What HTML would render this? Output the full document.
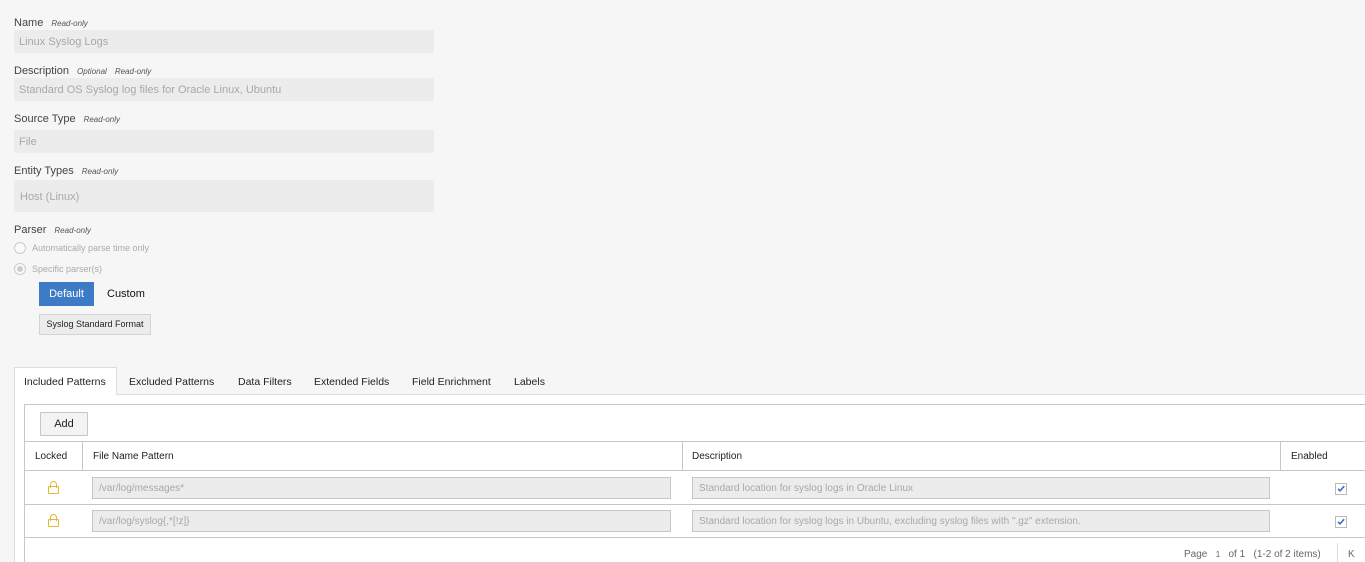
<!DOCTYPE html>
<html><head><style>
*{box-sizing:border-box;margin:0;padding:0}
body{width:1365px;height:562px;overflow:hidden;background:#f6f6f6;font-family:"Liberation Sans",sans-serif;color:#333;position:relative}
.a{position:absolute}
.lbl{font-size:11px;color:#444}
.lbl i{font-size:8px;color:#555;margin-left:8px}
.inp{background:#ececec;border-radius:2px;width:420px;left:14px;font-size:11px;color:#a8a8a8;padding-left:5px;padding-top:1px}
.radio{width:12px;height:12px;border:1px solid #ccc;border-radius:50%;background:#fafafa}
.rt{font-size:9px;color:#aaa}
.tab{font-size:10.5px;color:#222;top:376px}
.ti{background:#ececec;border:1px solid #c5c7cc;height:22px;font-size:10px;color:#a8a8a8;padding:5px 0 0 6px}
.cb{width:12px;height:12px;border:1px solid #bbb;background:#fff}
.cb svg{display:block;position:absolute;left:0;top:0}
.lock{width:11px;height:8px;border:1px solid #e8b730;border-radius:1px}
.lock:before{content:"";position:absolute;left:1px;top:-6px;width:5px;height:6px;border:1px solid #e8b730;border-bottom:none;border-radius:4px 4px 0 0}
</style></head><body>
<div class="a lbl" style="left:14px;top:17px">Name<i>Read-only</i></div>
<div class="a inp" style="top:30px;height:23px;line-height:23px">Linux Syslog Logs</div>
<div class="a lbl" style="left:14px;top:65px">Description<i>Optional</i><i>Read-only</i></div>
<div class="a inp" style="top:78px;height:23px;line-height:23px">Standard OS Syslog log files for Oracle Linux, Ubuntu</div>
<div class="a lbl" style="left:14px;top:113px">Source Type<i>Read-only</i></div>
<div class="a inp" style="top:130px;height:23px;line-height:23px">File</div>
<div class="a lbl" style="left:14px;top:165px">Entity Types<i>Read-only</i></div>
<div class="a inp" style="top:180px;height:32px;line-height:32px;padding-left:6px">Host (Linux)</div>
<div class="a lbl" style="left:14px;top:224px">Parser<i>Read-only</i></div>
<div class="a radio" style="left:14px;top:242px"></div>
<div class="a rt" style="left:32px;top:243px">Automatically parse time only</div>
<div class="a radio" style="left:14px;top:263px"><div style="width:6px;height:6px;border-radius:50%;background:#ccc;margin:2px"></div></div>
<div class="a rt" style="left:32px;top:264px">Specific parser(s)</div>
<div class="a" style="left:39px;top:282px;width:55px;height:24px;background:#3e7bc6;color:#fff;font-size:11px;text-align:center;line-height:24px">Default</div>
<div class="a" style="left:107px;top:288px;font-size:11px;color:#111">Custom</div>
<div class="a" style="left:39px;top:314px;width:112px;height:21px;background:#ececec;border:1px solid #d4d4d4;font-size:9px;color:#222;text-align:center;line-height:19px">Syslog Standard Format</div>

<div class="a" style="left:14px;top:394px;width:1351px;height:168px;background:#fff;border-top:1px solid #ddd;border-left:1px solid #ddd"></div>
<div class="a" style="left:14px;top:367px;width:103px;height:28px;background:#fff;border:1px solid #ddd;border-bottom:none"></div>
<div class="a tab" style="left:24px">Included Patterns</div>
<div class="a tab" style="left:129px">Excluded Patterns</div>
<div class="a tab" style="left:238px">Data Filters</div>
<div class="a tab" style="left:314px">Extended Fields</div>
<div class="a tab" style="left:412px">Field Enrichment</div>
<div class="a tab" style="left:514px">Labels</div>

<div class="a" style="left:24px;top:404px;width:1341px;height:158px;border:1px solid #c5c7cc;border-right:none;border-bottom:none"></div>
<div class="a" style="left:40px;top:412px;width:48px;height:24px;background:#f3f3f3;border:1px solid #c5c7cc;font-size:11px;text-align:center;line-height:22px;color:#222">Add</div>
<div class="a" style="left:24px;top:441px;width:1341px;height:1px;background:#c5c7cc"></div>
<div class="a" style="left:24px;top:470px;width:1341px;height:1px;background:#c5c7cc"></div>
<div class="a" style="left:24px;top:504px;width:1341px;height:1px;background:#c5c7cc"></div>
<div class="a" style="left:24px;top:537px;width:1341px;height:1px;background:#c5c7cc"></div>
<div class="a" style="left:82px;top:441px;width:1px;height:29px;background:#c5c7cc"></div>
<div class="a" style="left:682px;top:441px;width:1px;height:29px;background:#c5c7cc"></div>
<div class="a" style="left:1280px;top:441px;width:1px;height:29px;background:#c5c7cc"></div>
<div class="a" style="left:35px;top:451px;font-size:10px;color:#222">Locked</div>
<div class="a" style="left:93px;top:451px;font-size:10px;color:#222">File Name Pattern</div>
<div class="a" style="left:692px;top:451px;font-size:10px;color:#222">Description</div>
<div class="a" style="left:1291px;top:451px;font-size:10px;color:#222">Enabled</div>

<div class="a lock" style="left:48px;top:486px"></div>
<div class="a ti" style="left:92px;top:477px;width:579px">/var/log/messages*</div>
<div class="a ti" style="left:692px;top:477px;width:578px">Standard location for syslog logs in Oracle Linux</div>
<div class="a cb" style="left:1335px;top:483px"><svg width="10" height="10" viewBox="0 0 10 10"><path d="M2 4.8 L4 6.8 L8.2 2.2" fill="none" stroke="#3a72c5" stroke-width="1.6"/></svg></div>
<div class="a lock" style="left:48px;top:519px"></div>
<div class="a ti" style="left:92px;top:510px;width:579px">/var/log/syslog{,*[!z]}</div>
<div class="a ti" style="left:692px;top:510px;width:578px">Standard location for syslog logs in Ubuntu, excluding syslog files with ".gz" extension.</div>
<div class="a cb" style="left:1335px;top:516px"><svg width="10" height="10" viewBox="0 0 10 10"><path d="M2 4.8 L4 6.8 L8.2 2.2" fill="none" stroke="#3a72c5" stroke-width="1.6"/></svg></div>

<div class="a" style="left:1184px;top:549px;font-size:10px;color:#666">Page &nbsp;&nbsp;<span style="font-size:8px">1</span>&nbsp;&nbsp; of 1 &nbsp;&nbsp;(1-2 of 2 items)</div>
<div class="a" style="left:1337px;top:543px;width:1px;height:19px;background:#ddd"></div>
<div class="a" style="left:1348px;top:549px;font-size:10px;color:#666">K</div>
</body></html>
